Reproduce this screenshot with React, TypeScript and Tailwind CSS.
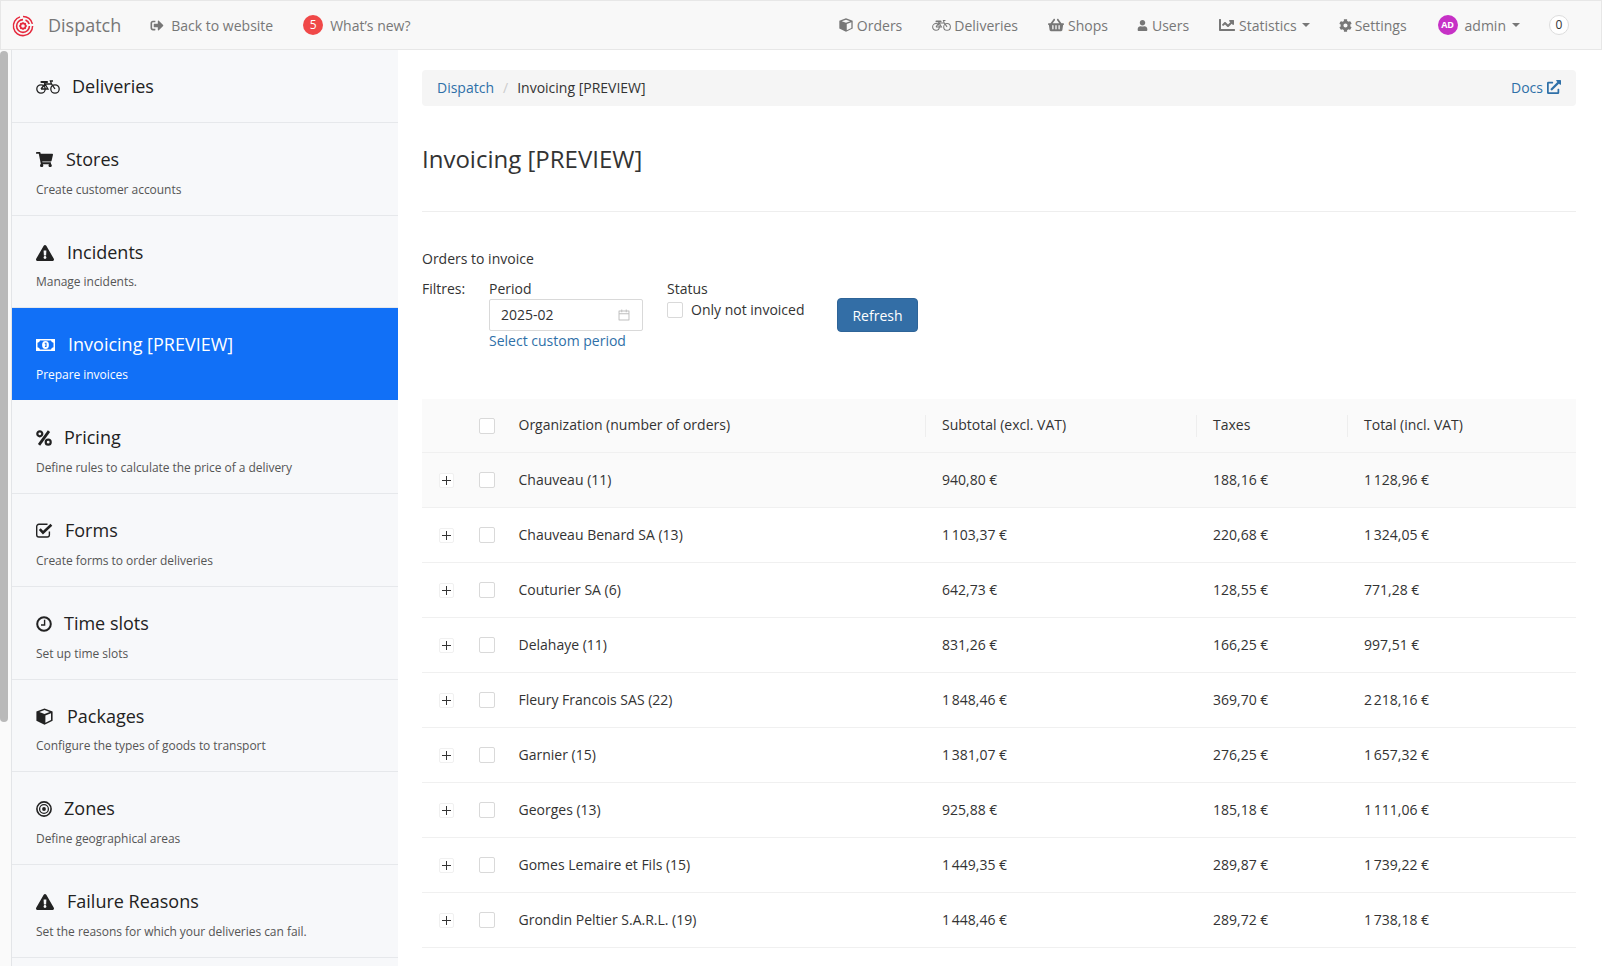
import React from "react";
import { AiOutlineCalendar } from "react-icons/ai";
import {
  FaChartLine, FaCog, FaExclamationTriangle, FaExternalLinkAlt, FaShoppingBasket,
  FaShoppingCart, FaSignOutAlt, FaUser,
} from "react-icons/fa";

const font = { fontFamily: '"Open Sans", sans-serif' };

function Logo() {
  return (
    <svg width="22" height="22" viewBox="0 0 22 22" fill="none" stroke="#e5283c">
      <path d="M8 1.9 A9.6 9.6 0 1 0 20.6 11" strokeWidth="1.5" />
      <path d="M20.4 8.8 A9.6 9.6 0 0 0 11 1.4" strokeWidth="1.5" />
      <path d="M17.4 11 A6.4 6.4 0 1 1 11 4.6" strokeWidth="1.6" />
      <path d="M13.5 4.9 A6.4 6.4 0 0 1 17.2 9" strokeWidth="1.6" />
      <circle cx="11" cy="11" r="2.6" strokeWidth="1.6" />
      <path d="M11 7.2V8.4M11 13.6v1.2M7.2 11H8.4M13.6 11h1.2M8.3 8.3l.9.9M12.8 12.8l.9.9M13.7 8.3l-.9.9M9.2 12.8l-.9.9" strokeWidth="1.3" />
    </svg>
  );
}

function Bike({ w }: { w: number }) {
  return (
    <svg width={w} height={(w * 15) / 24} viewBox="0 0 24 15" fill="none" stroke="currentColor" strokeWidth="1.3">
      <circle cx="5" cy="10" r="4.2" />
      <circle cx="19" cy="10" r="4.2" />
      <path d="M5 10 L9 5 H15.5 L19 10 M9 5 L12 10 H5 M15.5 5 L14.4 2 H17" />
      <path d="M5.5 3 H11" strokeWidth="2.2" strokeLinecap="round" />
      <path d="M8 3.2 L9 5" />
    </svg>
  );
}

function Money() {
  return (
    <svg width="19" height="12" viewBox="0 0 19 12">
      <rect width="19" height="12" fill="#fff" />
      <path d="M4 1.5 H15 Q15.3 3.5 17.5 3.7 V8.3 Q15.3 8.5 15 10.5 H4 Q3.7 8.5 1.5 8.3 V3.7 Q3.7 3.5 4 1.5Z" fill="#1170f7" />
      <ellipse cx="9.5" cy="6" rx="3.4" ry="4" fill="#fff" />
      <path d="M8.7 4.2 H10 V7.5 H8.9" stroke="#1170f7" strokeWidth="1.1" fill="none" />
    </svg>
  );
}

function Percent() {
  return (
    <svg width="16" height="16" viewBox="0 0 16 16" fill="none" stroke="currentColor">
      <circle cx="3.8" cy="3.8" r="2.5" strokeWidth="2.2" />
      <circle cx="12.2" cy="12.2" r="2.5" strokeWidth="2.2" />
      <path d="M13 1.2 L3 14.8" strokeWidth="2.8" />
    </svg>
  );
}

function CheckSquare() {
  return (
    <svg width="17" height="15" viewBox="0 0 17 15" fill="none" stroke="currentColor">
      <path d="M13.4 8.5 V11.8 A2.2 2.2 0 0 1 11.2 14 H2.9 A2.2 2.2 0 0 1 .7 11.8 V3.5 A2.2 2.2 0 0 1 2.9 1.3 H11.5" strokeWidth="1.4" />
      <path d="M3.8 6.2 L7 9.6 L15.4 1.8" strokeWidth="2.6" />
    </svg>
  );
}

function Clock() {
  return (
    <svg width="16" height="16" viewBox="0 0 16 16" fill="none" stroke="currentColor">
      <circle cx="8" cy="8" r="6.8" strokeWidth="2" />
      <path d="M8.6 3.8 V9 H5" strokeWidth="1.4" />
    </svg>
  );
}

function Cube({ w, cut }: { w: number; cut: string }) {
  return (
    <svg width={w} height={w} viewBox="0 0 17 17">
      <path d="M8.5 .4 L16.6 3.4 V12.8 L8.5 16.8 L.4 12.8 V3.4Z" fill="currentColor" />
      <path d="M8.5 2.1 L13.6 4 L8.5 5.9 L3.4 4Z" fill={cut} />
      <path d="M9.4 7.4 L15 5.3 V12 L9.4 14.8Z" fill={cut} />
    </svg>
  );
}

function Bullseye() {
  return (
    <svg width="16" height="16" viewBox="0 0 16 16" fill="none" stroke="currentColor">
      <circle cx="8" cy="8" r="7.1" strokeWidth="1.6" />
      <circle cx="8" cy="8" r="4.4" strokeWidth="1.3" />
      <circle cx="8" cy="8" r="1.9" fill="currentColor" strokeWidth="0" />
    </svg>
  );
}

function Caret({ className }: { className: string }) {
  return <span className={`inline-block w-0 h-0 border-x-[4px] border-x-transparent border-t-[4px] border-t-[#777] ${className}`} />;
}

const sideItems = [
  { t: "Deliveries", d: "", icon: <Bike w={24} />, w: "w-[36px]", h: "h-[73px]", mt: "" },
  { t: "Stores", d: "Create customer accounts", icon: <FaShoppingCart className="text-[17px]" />, w: "w-[30px]", h: "h-[93px]", mt: "mt-[9px]" },
  { t: "Incidents", d: "Manage incidents.", icon: <FaExclamationTriangle className="text-[18px]" />, w: "w-[31px]", h: "h-[92px]", mt: "mt-[8px]" },
  { t: "Invoicing [PREVIEW]", d: "Prepare invoices", icon: <Money />, w: "w-[32px]", h: "h-[92px]", mt: "mt-[9px]", active: true },
  { t: "Pricing", d: "Define rules to calculate the price of a delivery", icon: <Percent />, w: "w-[28px]", h: "h-[93px]", mt: "mt-[9px]" },
  { t: "Forms", d: "Create forms to order deliveries", icon: <CheckSquare />, w: "w-[29px]", h: "h-[93px]", mt: "mt-[9px]" },
  { t: "Time slots", d: "Set up time slots", icon: <Clock />, w: "w-[28px]", h: "h-[93px]", mt: "mt-[9px]" },
  { t: "Packages", d: "Configure the types of goods to transport", icon: <Cube w={17} cut="#f7f8fa" />, w: "w-[31px]", h: "h-[92px]", mt: "mt-[8px]" },
  { t: "Zones", d: "Define geographical areas", icon: <Bullseye />, w: "w-[28px]", h: "h-[93px]", mt: "mt-[9px]" },
  { t: "Failure Reasons", d: "Set the reasons for which your deliveries can fail.", icon: <FaExclamationTriangle className="text-[18px]" />, w: "w-[31px]", h: "h-[93px]", mt: "mt-[9px]" },
];

const rows = [
  ["Chauveau (11)", "940,80 €", "188,16 €", "1\u202f128,96 €"],
  ["Chauveau Benard SA (13)", "1\u202f103,37 €", "220,68 €", "1\u202f324,05 €"],
  ["Couturier SA (6)", "642,73 €", "128,55 €", "771,28 €"],
  ["Delahaye (11)", "831,26 €", "166,25 €", "997,51 €"],
  ["Fleury Francois SAS (22)", "1\u202f848,46 €", "369,70 €", "2\u202f218,16 €"],
  ["Garnier (15)", "1\u202f381,07 €", "276,25 €", "1\u202f657,32 €"],
  ["Georges (13)", "925,88 €", "185,18 €", "1\u202f111,06 €"],
  ["Gomes Lemaire et Fils (15)", "1\u202f449,35 €", "289,87 €", "1\u202f739,22 €"],
  ["Grondin Peltier S.A.R.L. (19)", "1\u202f448,46 €", "289,72 €", "1\u202f738,18 €"],
];

function Check() {
  return <span className="block w-4 h-4 bg-white border border-[#d9d9d9] rounded-[2px]" />;
}

const gridCols = "grid grid-cols-[49px_31px_424px_271px_151px_1fr] items-center";

export default function App() {
  return (
    <div style={font} className="h-[966px] overflow-hidden flex flex-col bg-white text-[14px] text-[#333]">
      <nav className="h-[50px] shrink-0 flex items-center bg-[#f8f8f8] border border-[#e7e7e7] text-[#777]">
        <span className="ml-[11px] mt-[1px]"><Logo /></span>
        <span className="ml-[14px] text-[18px]">Dispatch</span>
        <span className="ml-[29px] flex items-center">
          <FaSignOutAlt className="text-[13px] w-[14px]" />
          <span className="ml-[7px]">Back to website</span>
        </span>
        <span className="ml-[30px] flex items-center">
          <span className="w-5 h-5 rounded-full bg-[#f04848] text-white text-[12px] flex items-center justify-center">5</span>
          <span className="ml-[7px]">What’s new?</span>
        </span>
        <div className="ml-auto flex items-center">
          <span className="flex items-center gap-[4px]"><Cube w={14} cut="#f8f8f8" />Orders</span>
          <span className="ml-[30px] flex items-center gap-[3px]"><Bike w={19} />Deliveries</span>
          <span className="ml-[30px] flex items-center gap-[4px]"><FaShoppingBasket className="text-[16px]" />Shops</span>
          <span className="ml-[29px] flex items-center gap-[4px]"><FaUser className="text-[11px]" />Users</span>
          <span className="ml-[30px] flex items-center gap-[4px]"><FaChartLine className="text-[16px]" />Statistics<Caret className="ml-[1px]" /></span>
          <span className="ml-[29px] flex items-center gap-[3px]"><FaCog className="text-[13px]" />Settings</span>
          <span className="ml-[31px] flex items-center">
            <span className="w-5 h-5 rounded-full bg-[#c631c6] text-white text-[9px] font-bold flex items-center justify-center">AD</span>
            <span className="ml-[7px]">admin</span>
            <Caret className="ml-[6px]" />
          </span>
          <span className="ml-[29px] mr-[32px] w-[20px] h-[20px] rounded-full border border-[#ddd] bg-white text-[#333] text-[12px] flex items-center justify-center">0</span>
        </div>
      </nav>

      <div className="flex-1 flex min-h-0">
        <div className="w-[11px] shrink-0 bg-[#fafafa] relative">
          <div className="absolute left-0 top-[1px] w-[8px] h-[671px] bg-[#b9b9b9] rounded-[4px]" />
        </div>
        <aside className="w-[387px] shrink-0 bg-[#f7f8fa] border-l border-[#e3e5e8]">
          {sideItems.map((it) => (
            <div
              key={it.t}
              className={`px-[24px] pt-[24px] ${it.h} ${it.active ? "bg-[#1170f7] text-white mb-[1px]" : "border-b border-[#e6e8eb] text-[#222]"}`}
            >
              <div className="flex items-center text-[18px] leading-[25px]">
                <span className={`${it.w} shrink-0 flex items-center`}>{it.icon}</span>
                <span>{it.t}</span>
              </div>
              {it.d && (
                <div className={`${it.mt} text-[12px] leading-[17px] tracking-[-0.04px] ${it.active ? "text-white" : "text-[#555]"}`}>{it.d}</div>
              )}
            </div>
          ))}
        </aside>

        <main className="flex-1 min-w-0 pl-[24px] pr-[26px] pt-[20px]">
          <div className="h-[36px] pb-[2px] px-[15px] flex items-center justify-between bg-[#f5f5f5] rounded-[4px]">
            <div className="flex items-center">
              <span className="text-[#2f70a8]">Dispatch</span>
              <span className="mx-[9px] text-[#ccc]">/</span>
              <span>Invoicing [PREVIEW]</span>
            </div>
            <span className="flex items-center gap-[4px] text-[#2f70a8]">Docs<FaExternalLinkAlt className="text-[14px]" /></span>
          </div>

          <h1 className="mt-[36px] text-[24px] leading-[33px] font-normal">Invoicing [PREVIEW]</h1>
          <div className="mt-[36px] border-t border-[#eee]" />

          <div className="mt-[37px] leading-[20px]">Orders to invoice</div>
          <div className="mt-[10px] flex items-start">
            <div className="w-[67px] leading-[20px]">Filtres:</div>
            <div className="w-[178px]">
              <div className="leading-[20px]">Period</div>
              <div className="h-[32px] w-[154px] px-[11px] pb-[1px] flex items-center justify-between bg-white border border-[#d9d9d9] rounded-[2px]">
                <span>2025-02</span>
                <AiOutlineCalendar className="text-[14px] text-[#bfbfbf]" />
              </div>
              <div className="text-[#2f70a8] leading-[20px]">Select custom period</div>
            </div>
            <div className="w-[170px]">
              <div className="leading-[20px]">Status</div>
              <div className="flex items-center mt-[1px]">
                <Check />
                <span className="ml-[8px] leading-[20px]">Only not invoiced</span>
              </div>
            </div>
            <div className="mt-[19px] w-[81px] h-[34px] flex items-center justify-center bg-[#336ea6] border border-[#2e6498] rounded-[4px] text-white">Refresh</div>
          </div>

          <div className="mt-[48px]">
            <div className={`${gridCols} h-[54px] bg-[#fafafa] border-b border-[#f0f0f0]`}>
              <span />
              <span className="justify-self-center"><Check /></span>
              <span className="pl-[16.5px] pb-[2px] h-[22px] flex items-center">Organization (number of orders)</span>
              <span className="pl-[16px] pb-[2px] -ml-[1px] h-[22px] flex items-center border-l border-[#eee]">Subtotal (excl. VAT)</span>
              <span className="pl-[16px] pb-[2px] -ml-[1px] h-[22px] flex items-center border-l border-[#eee]">Taxes</span>
              <span className="pl-[16px] pb-[2px] -ml-[1px] h-[22px] flex items-center border-l border-[#eee]">Total (incl. VAT)</span>
            </div>
            {rows.map((r, i) => (
              <div key={r[0]} className={`${gridCols} h-[55px] border-b border-[#f0f0f0] ${i === 0 ? "bg-[#fafafa]" : "bg-white"}`}>
                <span className="justify-self-center w-[15px] h-[15px] bg-white border border-[#f0f0f0] rounded-[2px] flex items-center justify-center">
                  <svg width="9" height="9" viewBox="0 0 9 9" stroke="#333" strokeWidth="1"><path d="M4.5 0v9M0 4.5h9" /></svg>
                </span>
                <span className="justify-self-center"><Check /></span>
                <span className="pl-[16.5px] pb-[1px]">{r[0]}</span>
                <span className="pl-[16px] pb-[1px]">{r[1]}</span>
                <span className="pl-[16px] pb-[1px]">{r[2]}</span>
                <span className="pl-[16px] pb-[1px]">{r[3]}</span>
              </div>
            ))}
          </div>
        </main>
      </div>
    </div>
  );
}
